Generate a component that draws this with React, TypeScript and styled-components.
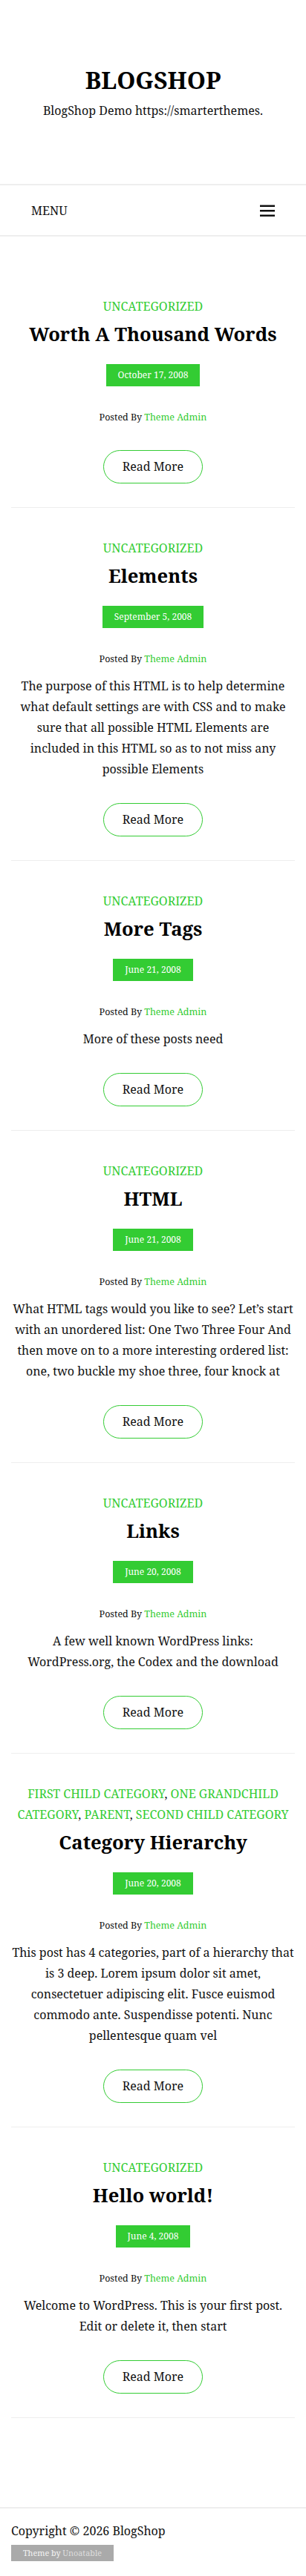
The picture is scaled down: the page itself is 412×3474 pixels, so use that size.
import React from "react";
import styled, { createGlobalStyle } from "styled-components";

const GREEN = "#33cc33";

type Post = {
	cats: string[];
	title: string;
	date: string;
	excerpt?: string;
};

const posts: Post[] = [
	{ cats: ["Uncategorized"], title: "Worth A Thousand Words", date: "October 17, 2008" },
	{
		cats: ["Uncategorized"],
		title: "Elements",
		date: "September 5, 2008",
		excerpt:
			"The purpose of this HTML is to help determine what default settings are with CSS and to make sure that all possible HTML Elements are included in this HTML so as to not miss any possible Elements",
	},
	{ cats: ["Uncategorized"], title: "More Tags", date: "June 21, 2008", excerpt: "More of these posts need" },
	{
		cats: ["Uncategorized"],
		title: "HTML",
		date: "June 21, 2008",
		excerpt:
			"What HTML tags would you like to see? Let\u2019s start with an unordered list: One Two Three Four And then move on to a more interesting ordered list: one, two buckle my shoe three, four knock at",
	},
	{
		cats: ["Uncategorized"],
		title: "Links",
		date: "June 20, 2008",
		excerpt: "A few well known WordPress links: WordPress.org, the Codex and the download",
	},
	{
		cats: ["First Child Category", "One Grandchild Category", "Parent", "Second Child Category"],
		title: "Category Hierarchy",
		date: "June 20, 2008",
		excerpt:
			"This post has 4 categories, part of a hierarchy that is 3 deep. Lorem ipsum dolor sit amet, consectetuer adipiscing elit. Fusce euismod commodo ante. Suspendisse potenti. Nunc pellentesque quam vel",
	},
	{
		cats: ["Uncategorized"],
		title: "Hello world!",
		date: "June 4, 2008",
		excerpt: "Welcome to WordPress. This is your first post. Edit or delete it, then start",
	},
];

const MenuIcon = () => (
	<svg width="20" height="16" viewBox="0 0 20 16" aria-hidden="true">
		<rect x="0" y="0.5" width="20" height="2.5" fill="#111" />
		<rect x="0" y="7" width="20" height="2.5" fill="#111" />
		<rect x="0" y="13.5" width="20" height="2.5" fill="#111" />
	</svg>
);

export default function App() {
	return (
		<Page>
			<GlobalStyle />
			<Header>
				<SiteTitle>BLOGSHOP</SiteTitle>
				<Tagline>BlogShop Demo https://smarterthemes.</Tagline>
			</Header>
			<Nav>
				<MenuLabel>MENU</MenuLabel>
				<MenuToggle aria-label="menu">
					<MenuIcon />
				</MenuToggle>
			</Nav>
			<Main>
				{posts.map((p) => (
					<Article key={p.title}>
						<Cats>
							{p.cats.map((c, i) => (
								<React.Fragment key={c}>
									<CatLink href="#">{c}</CatLink>
									{i < p.cats.length - 1 ? ", " : ""}
								</React.Fragment>
							))}
						</Cats>
						<PostTitle>{p.title}</PostTitle>
						<DateBadge>{p.date}</DateBadge>
						<Byline>
							Posted By <AuthorLink href="#">Theme Admin</AuthorLink>
						</Byline>
						{p.excerpt && <Excerpt>{p.excerpt}</Excerpt>}
						<ReadMore href="#">Read More</ReadMore>
					</Article>
				))}
			</Main>
			<Footer>
				<Copyright>Copyright © 2026 BlogShop</Copyright>
				<Credit>
					Theme by <CreditLink href="#">Unoatable</CreditLink>
				</Credit>
			</Footer>
		</Page>
	);
}

const GlobalStyle = createGlobalStyle`
	* {
		box-sizing: border-box;
	}
	body {
		margin: 0;
		background: #fff;
		color: #111;
		font-family: "Noto Serif", "DejaVu Serif", serif;
	}
	a {
		text-decoration: none;
	}
`;

const Page = styled.div`
	width: 100%;
	display: flex;
	flex-direction: column;
`;

const Header = styled.header`
	padding: 89px 15px 85px;
	text-align: center;
	border-bottom: 2px solid #eee;
`;

const SiteTitle = styled.h1`
	margin: 0;
	font-size: 32px;
	line-height: 38px;
	font-weight: 700;
	color: #000;
`;

const Tagline = styled.p`
	margin: 8px 0 0;
	font-size: 16px;
	line-height: 28px;
`;

const Nav = styled.nav`
	height: 69px;
	padding: 0 42px;
	display: flex;
	align-items: center;
	justify-content: space-between;
	border-bottom: 2px solid #eee;
`;

const MenuLabel = styled.span`
	font-size: 16px;
	line-height: 28px;
`;

const MenuToggle = styled.button`
	border: none;
	background: none;
	padding: 0;
	display: flex;
	cursor: pointer;
`;

const Main = styled.main`
	padding: 40px 15px 120px;
`;

const Article = styled.article`
	padding: 40px 0 32px;
	text-align: center;
	border-bottom: 1px solid #eee;
	display: flex;
	flex-direction: column;
	align-items: center;
`;

const Cats = styled.div`
	font-size: 16px;
	line-height: 28px;
	text-transform: uppercase;
	color: #111;
`;

const CatLink = styled.a`
	color: ${GREEN};
`;

const PostTitle = styled.h2`
	margin: 6px 0 0;
	font-size: 25.6px;
	line-height: 36px;
	font-weight: 700;
	color: #000;
`;

const DateBadge = styled.span`
	margin-top: 22px;
	height: 30px;
	padding: 0 16px;
	background: ${GREEN};
	color: #fff;
	font-size: 12px;
	line-height: 30px;
`;

const Byline = styled.div`
	margin-top: 30px;
	font-size: 12.5px;
	line-height: 24px;
`;

const AuthorLink = styled.a`
	color: ${GREEN};
`;

const Excerpt = styled.p`
	margin: 10px 0 0;
	font-size: 16px;
	line-height: 28px;
`;

const ReadMore = styled.a`
	margin-top: 32px;
	padding: 8px 25px;
	border: 1px solid ${GREEN};
	border-radius: 30px;
	font-size: 16px;
	line-height: 27px;
	color: #111;
`;

const Footer = styled.footer`
	padding: 16px 15px 18px;
	border-top: 2px solid #eee;
	display: flex;
	flex-direction: column;
	align-items: flex-start;
`;

const Copyright = styled.p`
	margin: 0;
	font-size: 16px;
	line-height: 28px;
`;

const Credit = styled.div`
	margin-top: 5px;
	padding: 0 16px;
	height: 22px;
	background: #aaa;
	color: #f4f4f4;
	font-size: 10.8px;
	line-height: 22px;
`;

const CreditLink = styled.a`
	color: #ddd;
`;
